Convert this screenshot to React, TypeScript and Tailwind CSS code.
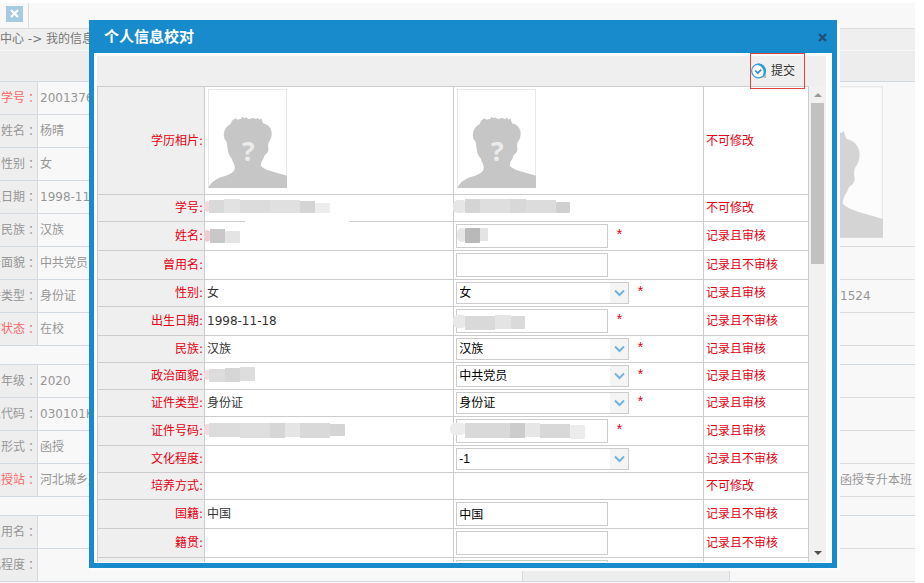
import React from "react";

type Piece = [x: number, y: number, w: number, h: number, fill: string];

type Field = {
  label: string;
  kind: "photo" | "text" | "input" | "select";
  rule: string;
  current?: string;
  value?: string;
  required?: boolean;
  currentMask?: Piece[];
  valueMask?: Piece[];
};

const LOCKED = "不可修改";
const AUDIT = "记录且审核";
const NO_AUDIT = "记录且不审核";

const fields: Field[] = [
  { label: "学历相片", kind: "photo", rule: LOCKED },
  {
    label: "学号",
    kind: "text",
    rule: LOCKED,
    currentMask: [
      [41, 23, 104, 8, "#ffffff"],
      [0, 6, 7, 11, "#f6d9dc"],
      [5, 5, 16, 13, "#d9d9d9"],
      [20, 4, 16, 14, "#e2e2e2"],
      [36, 5, 30, 13, "#dcdcdc"],
      [66, 5, 30, 13, "#e0e0e0"],
      [96, 6, 15, 12, "#d4d4d4"],
      [111, 8, 15, 10, "#ececec"],
    ],
    valueMask: [
      [0, 5, 14, 13, "#e6e6e6"],
      [12, 4, 15, 14, "#d4d4d4"],
      [27, 4, 30, 14, "#dedede"],
      [57, 4, 16, 14, "#d8d8d8"],
      [73, 5, 30, 13, "#dcdcdc"],
      [103, 7, 14, 11, "#d0d0d0"],
    ],
  },
  {
    label: "姓名",
    kind: "input",
    rule: AUDIT,
    required: true,
    currentMask: [
      [0, 8, 7, 12, "#efcfd3"],
      [6, 7, 15, 14, "#c8c8c8"],
      [21, 9, 15, 12, "#e4e4e4"],
    ],
    valueMask: [
      [4, 6, 10, 14, "#e6e6e6"],
      [26, 6, 9, 13, "#e4e4e4"],
      [12, 6, 15, 15, "#b9b9b9"],
    ],
  },
  { label: "曾用名", kind: "input", rule: NO_AUDIT },
  { label: "性别", kind: "select", rule: AUDIT, current: "女", value: "女", required: true },
  {
    label: "出生日期",
    kind: "input",
    rule: NO_AUDIT,
    current: "1998-11-18",
    required: true,
    valueMask: [
      [0, 8, 14, 13, "#e8e8e8"],
      [12, 9, 30, 14, "#d9d9d9"],
      [42, 8, 16, 14, "#e4e4e4"],
      [58, 9, 14, 13, "#dadada"],
    ],
  },
  { label: "民族", kind: "select", rule: AUDIT, current: "汉族", value: "汉族", required: true },
  {
    label: "政治面貌",
    kind: "select",
    rule: AUDIT,
    value: "中共党员",
    required: true,
    currentMask: [
      [0, 7, 7, 10, "#f3dde0"],
      [5, 6, 16, 13, "#dcdcdc"],
      [21, 5, 15, 14, "#d6d6d6"],
      [36, 4, 15, 14, "#dddddd"],
    ],
  },
  { label: "证件类型", kind: "select", rule: AUDIT, current: "身份证", value: "身份证", required: true },
  {
    label: "证件号码",
    kind: "input",
    rule: AUDIT,
    required: true,
    currentMask: [
      [0, 7, 7, 11, "#f4dcdf"],
      [5, 6, 31, 14, "#dcdcdc"],
      [36, 6, 30, 15, "#dfdfdf"],
      [66, 6, 15, 15, "#d6d6d6"],
      [81, 6, 15, 14, "#e5e5e5"],
      [96, 6, 30, 15, "#d9d9d9"],
      [126, 7, 15, 12, "#d4d4d4"],
    ],
    valueMask: [
      [-3, 6, 16, 12, "#ececec"],
      [12, 6, 45, 15, "#d9d9d9"],
      [57, 6, 15, 15, "#cccccc"],
      [72, 6, 15, 14, "#e6e6e6"],
      [87, 7, 30, 14, "#d8d8d8"],
      [117, 8, 15, 14, "#ececec"],
    ],
  },
  { label: "文化程度", kind: "select", rule: NO_AUDIT, value: "-1" },
  { label: "培养方式", kind: "text", rule: LOCKED },
  { label: "国籍", kind: "input", rule: NO_AUDIT, current: "中国", value: "中国" },
  { label: "籍贯", kind: "input", rule: NO_AUDIT },
  { label: "", kind: "input", rule: "" },
];

const groups: { label: string; value: string; red?: boolean; extra?: string; band?: boolean }[][] = [
  [
    { label: "学号", value: "200137600", red: true },
    { label: "姓名", value: "杨晴" },
    { label: "性别", value: "女" },
    { label: "出生日期", value: "1998-11-18" },
    { label: "民族", value: "汉族" },
    { label: "政治面貌", value: "中共党员" },
    { label: "证件类型", value: "身份证", extra: "1524" },
    { label: "学籍状态", value: "在校", red: true },
  ],
  [
    { label: "年级", value: "2020" },
    { label: "专业代码", value: "030101K" },
    { label: "学习形式", value: "函授" },
    { label: "函授站", value: "河北城乡建设学校", red: true, extra: "函授专升本班" },
  ],
  [
    { label: "曾用名", value: "" },
    { label: "文化程度", value: "", band: true },
  ],
];

function Portrait({ className }: { className: string }) {
  return (
    <svg viewBox="24 27 237 297" className={className} role="img" aria-label="相片">
      <rect x="24" y="27" width="237" height="297" fill="#fff" stroke="#e4e4e4" strokeWidth="5" />
      <path
        fill="#c6c6c6"
        strokeLinejoin="round"
        d="M25 324 Q34 303 62 292 Q92 284 102 272 Q107 264 101 250 Q96 242 96 236 Q84 224 83 206 L80 186 Q69 176 72 160 Q73 146 86 136 Q94 132 96 122 L106 115 L113 119 L124 116 L127 110 L133 115 L138 112 L146 117 L160 114 L168 117 L174 113 L179 119 L184 115 L189 130 Q208 134 214 152 Q218 170 208 184 Q203 190 205 204 Q207 216 198 222 Q193 224 191 234 Q182 246 182 257 Q190 266 212 273 L261 287 V324 Z"
      />
      <text
        x="145"
        y="244"
        textAnchor="middle"
        className="fill-[#ebebeb] font-['Open_Sans'] text-[80px] font-bold"
      >
        ?
      </text>
    </svg>
  );
}

function Mask({ pieces }: { pieces: Piece[] }) {
  return (
    <svg
      width="150"
      height="32"
      aria-hidden="true"
      className="pointer-events-none absolute top-0 -left-px z-10 overflow-visible"
    >
      {pieces.map(([x, y, w, h, fill], i) => (
        <rect
          key={`${x}-${y}`}
          x={x}
          y={y}
          width={w}
          height={h}
          rx={x < 5 ? 5 : i === pieces.length - 1 ? 1 : 0}
          fill={fill}
        />
      ))}
    </svg>
  );
}

function Editor({ field, id }: { field: Field; id: string }) {
  if (field.kind === "photo") return <Portrait className="mb-1 ml-px h-[99px] w-[79px]" />;
  if (field.kind === "text") return null;
  return (
    <div className="flex items-center">
      {field.kind === "input" ? (
        <input
          id={id}
          defaultValue={field.value}
          aria-label={field.label || "备注"}
          className="h-6 w-[152px] border border-[#ccc] bg-white px-0.5 pb-0.5 text-black outline-none"
        />
      ) : (
        <span className="relative block h-[22px] w-[173px]">
          <select
            id={id}
            aria-label={field.label}
            className="block h-full w-full appearance-none border border-[#ccc] bg-white px-0.5 font-['Liberation_Sans','Noto_Sans_CJK_SC',sans-serif] text-black outline-none"
          >
            <option>{field.value}</option>
          </select>
          <span className="pointer-events-none absolute inset-y-px right-px flex w-[18px] items-center justify-center bg-[#f4f4f4]">
            <svg width="11" height="8" viewBox="0 0 11 8" fill="none" stroke="#76b2dc" strokeWidth="2">
              <path d="M1 1.5 L5.5 6 L10 1.5" />
            </svg>
          </span>
        </span>
      )}
      {field.required && (
        <span className="ml-[7px] h-5 font-['Liberation_Mono'] text-sm leading-5 text-[#e60012]">*</span>
      )}
    </div>
  );
}

function FieldRow({ field, index }: { field: Field; index: number }) {
  const id = `field-${index}`;
  const height = field.kind === "photo" ? "h-[108px]" : field.kind === "input" ? "h-[29px]" : "h-[27px]";
  const cell = "relative border-r border-b border-[#ccc] p-0 pl-0.5 text-left";
  return (
    <tr className={height}>
      <th className="border-r border-b border-l border-[#ccc] bg-[#efefef] p-0 pr-px text-right font-normal text-[#e60012]">
        {field.label && <label htmlFor={id}>{field.label}:</label>}
      </th>
      <td className={cell}>
        {field.kind === "photo" ? <Portrait className="mb-1 ml-px h-[99px] w-[79px]" /> : field.current}
        {field.currentMask && <Mask pieces={field.currentMask} />}
      </td>
      <td className={cell}>
        <Editor field={field} id={id} />
        {field.valueMask && <Mask pieces={field.valueMask} />}
      </td>
      <td className={`${cell} text-[#e60012]`}>{field.rule}</td>
    </tr>
  );
}

function RecordPage() {
  return (
    <main className="mr-[9px] bg-[#f8f8f8] pb-1 text-[#969696]">
      <div className="flex h-[25px]">
        <div className="flex w-[29px] items-center border-r border-[#ddd] pb-1 pl-1.5">
          <button aria-label="关闭标签" className="flex h-4 w-[17px] items-center justify-center bg-[#a6cadf]">
            <svg width="9" height="9" viewBox="0 0 9 9" stroke="#fff" strokeWidth="2.2">
              <path d="M1 1 L8 8 M8 1 L1 8" />
            </svg>
          </button>
        </div>
      </div>
      <nav className="h-[22px] border-t border-[#ddd] bg-[#efefef] leading-[21px] whitespace-nowrap text-[#777]">
        中心 -&gt; 我的信息
      </nav>
      <div className="mt-px h-[30px] bg-[#ededed]" />
      {groups.map((rows, g) => (
        <table
          key={g}
          className="mb-[18px] w-full table-fixed border-separate border-spacing-0 border-t border-[#d3d9e3]"
        >
          <colgroup>
            <col className="w-[38px]" />
            <col />
            <col className="w-[208px]" />
            <col className="w-[185px]" />
          </colgroup>
          <tbody>
            {rows.map((row, r) => (
              <tr key={row.label} className="h-[33px]">
                <th
                  className={`border-r border-b border-[#d3d9e3] bg-[#eeeeee] p-0 font-normal ${row.red ? "text-[#f56a6a]" : ""}`}
                >
                  <div className="flex justify-end overflow-hidden whitespace-nowrap">
                    {row.label}
                    <span className="font-['Noto_Sans_CJK_TC']" lang="zh-TW">
                      ：
                    </span>
                  </div>
                </th>
                <td className="overflow-hidden border-b border-[#d3d9e3] p-0 pl-0.5 whitespace-nowrap">{row.value}</td>
                <td className={`border-b border-[#d3d9e3] p-0 ${row.band ? "border-x bg-[#eeeeee]" : ""}`} />
                {g === 0 && r === 0 && (
                  <td rowSpan={5} className="border-b border-[#dcdcdc] p-0 pr-8 pb-1">
                    <Portrait className="ml-auto h-[152px] w-[121px] opacity-70" />
                  </td>
                )}
                {!(g === 0 && r < 5) && (
                  <td className="border-b border-[#dcdce0] p-0 pl-[110px] whitespace-nowrap">{row.extra}</td>
                )}
              </tr>
            ))}
          </tbody>
        </table>
      ))}
    </main>
  );
}

export default function App() {
  return (
    <div className="relative h-screen overflow-hidden bg-white pt-[3px] font-['DejaVu_Sans','Noto_Sans_CJK_SC',sans-serif] text-xs text-[#333]">
      <RecordPage />
      <section
        role="dialog"
        aria-labelledby="dialog-title"
        className="absolute top-5 right-[87px] bottom-[15px] left-[89px] flex flex-col border-[5px] border-[#188bcd] bg-white shadow-[2px_2px_0_1px_#fbfbfb]"
      >
        <header className="flex h-7 shrink-0 items-center justify-between bg-[#188bcd] pr-[5px] pb-1 pl-2.5">
          <h1 id="dialog-title" className="text-[15px] leading-6 font-bold text-white">
            个人信息校对
          </h1>
          <button aria-label="关闭" className="flex size-[9px] items-center justify-center">
            <svg width="9" height="9" viewBox="0 0 9 9" stroke="#1d4f73" strokeWidth="2.2">
              <path d="M1 1 L8 8 M8 1 L1 8" />
            </svg>
          </button>
        </header>
        <div className="flex min-h-0 flex-1 flex-col pt-[3px] pr-1.5 pb-px pl-[3px]">
          <div className="flex h-[30px] shrink-0 items-center justify-end bg-[#efefef] pr-[21px]">
            <button className="relative z-10 flex h-9 w-[55px] items-center gap-1 border border-[#e04040] text-xs text-[#333]">
              <svg width="16" height="16" viewBox="0 0 16 16" fill="none">
                <path d="M10 14 L15 15 L14.5 10 Z" fill="#a9b4bb" />
                <circle cx="7.5" cy="8" r="6.8" fill="#fff" stroke="#2c9fd8" strokeWidth="1.2" />
                <path
                  d="M7 1.2 A6.8 6.8 0 0 1 12.8 12 A8 8 0 0 0 7 1.2 Z"
                  fill="#2c9fd8"
                  stroke="#2c9fd8"
                  strokeWidth="1.6"
                />
                <path d="M4.2 7.6 L6.8 10 L10.2 6.6" stroke="#2c8fc9" strokeWidth="1.7" />
              </svg>
              提交
            </button>
          </div>
          <div className="flex min-h-0 flex-1 overflow-hidden">
            <div className="min-w-0 flex-1 overflow-hidden">
              <table className="w-full table-fixed border-separate border-spacing-0 border-t border-[#ccc]">
                <colgroup>
                  <col className="w-[108px]" />
                  <col className="w-[35%]" />
                  <col />
                  <col className="w-[105px]" />
                </colgroup>
                <tbody>
                  {fields.map((field, i) => (
                    <FieldRow key={field.label} field={field} index={i} />
                  ))}
                </tbody>
              </table>
            </div>
            <div aria-hidden="true" className="flex w-[17px] flex-col items-center bg-[#f1f1f1] pt-px">
              <div className="flex h-4 items-center">
                <svg width="8" height="4" viewBox="0 0 8 4" fill="#9a9a9a">
                  <path d="M0 4 L4 0 L8 4 Z" />
                </svg>
              </div>
              <div className="h-[161px] w-[13px] bg-[#c1c1c1]" />
              <div className="mt-auto flex h-[18px] items-center">
                <svg width="8" height="4" viewBox="0 0 8 4" fill="#505050">
                  <path d="M0 0 L8 0 L4 4 Z" />
                </svg>
              </div>
            </div>
          </div>
        </div>
      </section>
    </div>
  );
}
